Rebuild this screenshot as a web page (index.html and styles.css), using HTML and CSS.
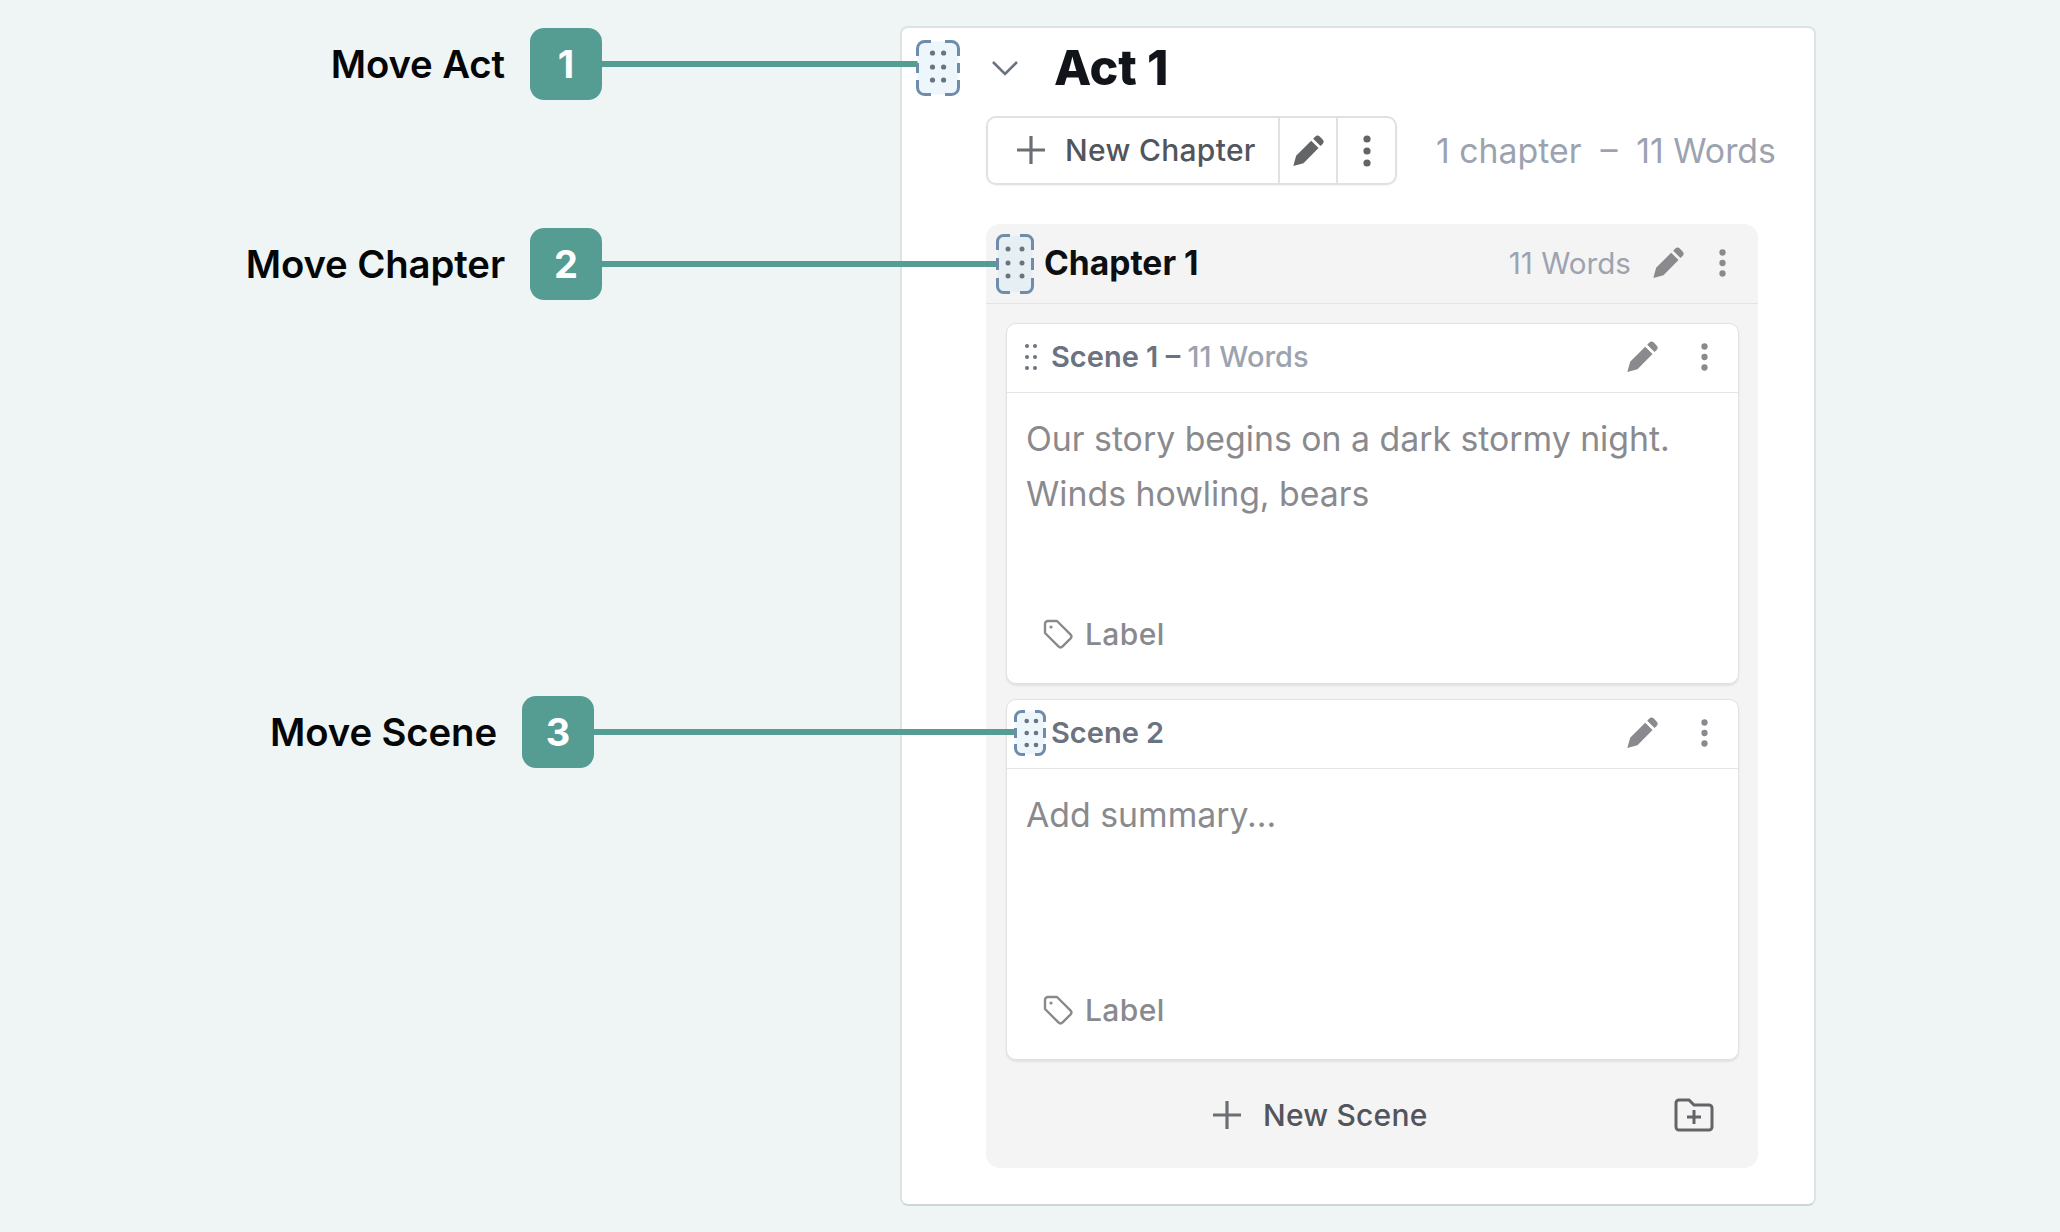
FILE: index.html
```html
<!DOCTYPE html>
<html lang="en">
<head>
<meta charset="utf-8">
<title>Move Act, Chapter, Scene</title>
<link rel="stylesheet" href="styles.css">
</head>
<body>
<svg class="defs" width="0" height="0" aria-hidden="true">
  <symbol id="pencil" viewBox="0 0 24 24">
    <path d="M1 23.200 3.100 15.600 14.400 4.300 19.900 9.800 8.600 21.100Z"/>
    <path d="M15.900 2.800 17.300 1.400a2.600 2.600 0 0 1 3.700 0l1.800 1.800a2.600 2.600 0 0 1 0 3.700L21.400 8.300Z"/>
  </symbol>
  <symbol id="dots" viewBox="0 0 8 32">
    <circle cx="4" cy="4" r="3.600"/><circle cx="4" cy="16" r="3.600"/><circle cx="4" cy="28" r="3.600"/>
  </symbol>
  <symbol id="plus" viewBox="0 0 30 30">
    <path d="M15 1v28M1 15h28" fill="none" stroke="currentColor" stroke-width="3.200"/>
  </symbol>
  <symbol id="tag" viewBox="0 0 30 30">
    <path d="M2 5a3 3 0 0 1 3-3h9l13.400 13.400a3 3 0 0 1 0 4.200l-7.800 7.800a3 3 0 0 1-4.200 0L2 14Z" fill="none" stroke="currentColor" stroke-width="2.400" stroke-linejoin="round"/>
    <circle cx="8" cy="8" r="1.600" fill="currentColor"/>
  </symbol>
</svg>

<main class="panel">
  <header class="act-row">
    <svg class="chevron" viewBox="0 0 28 16"><path d="M2 2 14 14 26 2" fill="none" stroke="currentColor" stroke-width="2.600"/></svg>
    <h1 class="act-title">Act 1</h1>
  </header>
  <div class="toolbar-row">
    <div class="btn-group">
      <div class="btn btn-new"><svg class="plus"><use href="#plus"/></svg><span>New Chapter</span></div>
      <div class="btn btn-icon"><svg class="pencil"><use href="#pencil"/></svg></div>
      <div class="btn btn-more"><svg class="dots dots-lg"><use href="#dots"/></svg></div>
    </div>
    <div class="stats">1 chapter&nbsp; –&nbsp; 11 Words</div>
  </div>

  <section class="chapter">
    <header class="chapter-head">
      <h2 class="chapter-title">Chapter 1</h2>
      <span class="chapter-words">11 Words</span>
      <svg class="pencil pencil-light"><use href="#pencil"/></svg>
      <svg class="dots dots-light"><use href="#dots"/></svg>
    </header>
    <div class="scenes">
      <article class="scene">
        <header class="scene-head">
          <svg class="grip" viewBox="0 0 14 28"><g fill="#6b7280"><circle cx="3" cy="3" r="2"/><circle cx="11" cy="3" r="2"/><circle cx="3" cy="14" r="2"/><circle cx="11" cy="14" r="2"/><circle cx="3" cy="25" r="2"/><circle cx="11" cy="25" r="2"/></g></svg>
          <h3 class="scene-title">Scene 1 – <span class="scene-words">11 Words</span></h3>
          <svg class="pencil pencil-light"><use href="#pencil"/></svg>
          <svg class="dots dots-light"><use href="#dots"/></svg>
        </header>
        <p class="summary">Our story begins on a dark stormy night. Winds howling, bears</p>
        <div class="label"><svg class="tag"><use href="#tag"/></svg><span>Label</span></div>
      </article>
      <article class="scene">
        <header class="scene-head scene-head-plain">
          <h3 class="scene-title">Scene 2</h3>
          <svg class="pencil pencil-light"><use href="#pencil"/></svg>
          <svg class="dots dots-light"><use href="#dots"/></svg>
        </header>
        <p class="summary">Add summary...</p>
        <div class="label"><svg class="tag"><use href="#tag"/></svg><span>Label</span></div>
      </article>
    </div>
    <footer class="chapter-foot">
      <div class="new-scene"><svg class="plus"><use href="#plus"/></svg><span>New Scene</span></div>
      <svg class="folder" viewBox="0 0 40 34"><path d="M2 5a3 3 0 0 1 3-3h10l5 5h15a3 3 0 0 1 3 3v19a3 3 0 0 1-3 3H5a3 3 0 0 1-3-3Z" fill="none" stroke="currentColor" stroke-width="3"/><path d="M20 12v14M13 19h14" fill="none" stroke="currentColor" stroke-width="3"/></svg>
    </footer>
  </section>
</main>

<div class="callout callout-1">
  <span class="callout-text">Move Act</span><span class="badge">1</span><span class="line"></span>
</div>
<div class="callout callout-2">
  <span class="callout-text">Move Chapter</span><span class="badge">2</span><span class="line"></span>
</div>
<div class="callout callout-3">
  <span class="callout-text">Move Scene</span><span class="badge">3</span><span class="line"></span>
</div>

<svg class="handle handle-act" viewBox="0 0 44 56"><rect x="1.500" y="1.500" width="41" height="53" rx="7" fill="#edf7fb"/><path d="M1.500 16V8.500a7 7 0 0 1 7-7H15M29 1.500h6.500a7 7 0 0 1 7 7V16M42.500 23v10M42.500 40v7.500a7 7 0 0 1-7 7H29M15 54.500H8.500a7 7 0 0 1-7-7V40M1.500 33V23" fill="none" stroke="#6f8cab" stroke-width="3"/><g fill="#6b7280"><circle cx="16.500" cy="13" r="2.600"/><circle cx="27.600" cy="13" r="2.600"/><circle cx="16.500" cy="27" r="2.600"/><circle cx="27.600" cy="27" r="2.600"/><circle cx="16.500" cy="40" r="2.600"/><circle cx="27.600" cy="40" r="2.600"/></g></svg>
<svg class="handle handle-chapter" viewBox="0 0 38 60"><rect x="1.500" y="1.500" width="35" height="57" rx="6" fill="#e6eff4"/><path d="M1.500 16V7.500a6 6 0 0 1 6-6H14M24 1.500h6.500a6 6 0 0 1 6 6V16M36.500 24v12M36.500 44v8.500a6 6 0 0 1-6 6H24M14 58.500H7.500a6 6 0 0 1-6-6V44M1.500 36V24" fill="none" stroke="#6f8cab" stroke-width="3"/><g fill="#6b7280"><circle cx="12" cy="15" r="2.500"/><circle cx="26" cy="15" r="2.500"/><circle cx="12" cy="29" r="2.500"/><circle cx="26" cy="29" r="2.500"/><circle cx="12" cy="42" r="2.500"/><circle cx="26" cy="42" r="2.500"/></g></svg>
<svg class="handle handle-scene" viewBox="0 0 32 46"><rect x="1.500" y="1.500" width="29" height="43" rx="6" fill="#edf7fb"/><path d="M1.500 12V7.500a6 6 0 0 1 6-6H11M21 1.500h3.500a6 6 0 0 1 6 6V12M30.500 18v10M30.500 34v4.500a6 6 0 0 1-6 6H21M11 44.500H7.500a6 6 0 0 1-6-6V34M1.500 28V18" fill="none" stroke="#6f8cab" stroke-width="3"/><g fill="#6b7280"><circle cx="12.700" cy="11" r="2.300"/><circle cx="22" cy="11" r="2.300"/><circle cx="12.700" cy="23" r="2.300"/><circle cx="22" cy="23" r="2.300"/><circle cx="12.700" cy="35" r="2.300"/><circle cx="22" cy="35" r="2.300"/></g></svg>
</body>
</html>
```
FILE: styles.css
```css
* { box-sizing: border-box; }
html, body { margin: 0; height: 100%; }
body {
  position: relative;
  background: #eff5f5;
  font-family: Inter, "Liberation Sans", sans-serif;
  padding: 26px 244px 0 900px;
  overflow: hidden;
}
h1, h2, h3, p { margin: 0; }
.defs { position: absolute; }

.panel {
  height: 1180px;
  background: #fff;
  border: 2px solid #dde3e3;
  border-bottom-color: #d0d5d5;
  border-radius: 8px;
  padding: 12px 0 0 84px;
  display: flex;
  flex-direction: column;
}
.act-row { height: 56px; display: flex; align-items: center; }
.chevron { width: 28px; height: 16px; margin-left: 5px; color: #6b7280; }
.act-title { margin-left: 35px; font-size: 48.500px; line-height: 56px; font-weight: 800; letter-spacing: -.2px; color: #111418; }

.toolbar-row { margin-top: 20px; display: flex; align-items: center; }
.btn-group {
  display: flex;
  width: 411px;
  height: 69px;
  border: 2px solid #e0e1e3;
  border-radius: 10px;
  box-shadow: 0 1px 2px rgba(0, 0, 0, .05);
  color: #52555c;
}
.btn { display: flex; align-items: center; justify-content: center; }
.btn-new { width: 290px; padding: 0 0 1px 28px; justify-content: flex-start; font-size: 30px; font-weight: 550; letter-spacing: .3px; }
.btn-new .plus { margin-right: 19px; }
.btn-icon { width: 58px; border-left: 2px solid #e0e1e3; padding-right: 1px; }
.btn-more { flex: 1; border-left: 2px solid #e0e1e3; }
.plus { width: 30px; height: 30px; color: #6b6e75; }
.pencil { width: 32px; height: 32px; fill: #636468; }
.dots { width: 7px; height: 28px; fill: #636468; }
.dots-lg { width: 8px; height: 32px; }
.pencil-light, .dots-light { fill: #8a8a8e; }
.stats { margin-left: 39px; font-size: 33.800px; color: #9ca3af; white-space: nowrap; }

.chapter {
  margin-top: 39px;
  width: 772px;
  height: 944px;
  background: #f4f4f5;
  border-radius: 14px;
  display: flex;
  flex-direction: column;
}
.chapter-head {
  height: 80px;
  flex: none;
  display: flex;
  align-items: center;
  padding: 0 32px 2px 58px;
  border-bottom: 1px solid #e4e4e6;
}
.chapter-title { font-size: 33.600px; font-weight: 700; color: #0d0f12; }
.chapter-words { margin-left: auto; margin-right: 21px; font-size: 29.600px; color: #9ca3af; }
.chapter-head .pencil { margin-right: 35px; }

.scenes { padding: 19px 19px 0 20px; display: flex; flex-direction: column; gap: 15.500px; }
.scene {
  height: 360.500px;
  background: #fff;
  border: 1px solid #e2e2e4;
  border-radius: 10px;
  box-shadow: 0 2px 2px rgba(0, 0, 0, .08);
  display: flex;
  flex-direction: column;
}
.scene-head {
  height: 68.500px;
  flex: none;
  display: flex;
  align-items: center;
  padding: 0 30px 2px 17px;
  border-bottom: 1px solid #e4e4e6;
}
.scene-head-plain { padding-left: 44px; }
.grip { width: 14px; height: 28px; margin-right: 13px; }
.scene-title { font-size: 29px; font-weight: 600; color: #6b7280; flex: 1; }
.scene-words { font-weight: 500; color: #9ca3af; }
.scene-head .pencil { margin-right: 43px; }
.summary {
  padding: 18px 19px 0;
  font-size: 33.800px;
  line-height: 55.500px;
  color: #8a8a8e;
  height: 180px;
}
.label {
  margin-top: 43px;
  margin-left: 36px;
  display: flex;
  align-items: center;
  font-size: 30px;
  font-weight: 500;
  letter-spacing: .4px;
  color: #8a8a8e;
}
.tag { width: 30px; height: 30px; margin-right: 12px; }

.chapter-foot {
  flex: 1;
  position: relative;
  display: flex;
  align-items: center;
  padding: 3px 44px 0 0;
}
.new-scene {
  display: flex;
  align-items: center;
  margin-left: 226px;
  font-size: 30px;
  font-weight: 550;
  letter-spacing: .2px;
  color: #52555c;
}
.new-scene .plus { margin-right: 21px; }
.folder { margin-left: auto; width: 40px; height: 34px; color: #636468; }

.callout { position: absolute; display: flex; align-items: center; height: 72px; }
.callout-1 { top: 28px; left: 100px; width: 818px; }
.callout-2 { top: 228px; left: 100px; width: 902px; }
.callout-3 { top: 696px; left: 100px; width: 920px; }
.callout-text { flex: none; margin-left: auto; margin-right: 25px; font-size: 38.300px; font-weight: 600; letter-spacing: -.1px; color: #050607; white-space: nowrap; }
.callout-1 .line { width: 316px; }
.callout-2 .line { width: 400px; }
.callout-3 .line { width: 426px; }
.badge {
  flex: none;
  width: 72px;
  height: 72px;
  border-radius: 14px;
  background: #559d93;
  color: #fff;
  font-size: 38px;
  font-weight: 700;
  line-height: 72px;
  text-align: center;
}
.line { flex: none; height: 6px; background: #559d93; }

.handle { position: absolute; }
.handle-act { left: 916px; top: 40px; width: 44px; height: 56px; }
.handle-chapter { left: 996px; top: 234px; width: 38px; height: 60px; }
.handle-scene { left: 1014px; top: 710px; width: 32px; height: 46px; }
```
